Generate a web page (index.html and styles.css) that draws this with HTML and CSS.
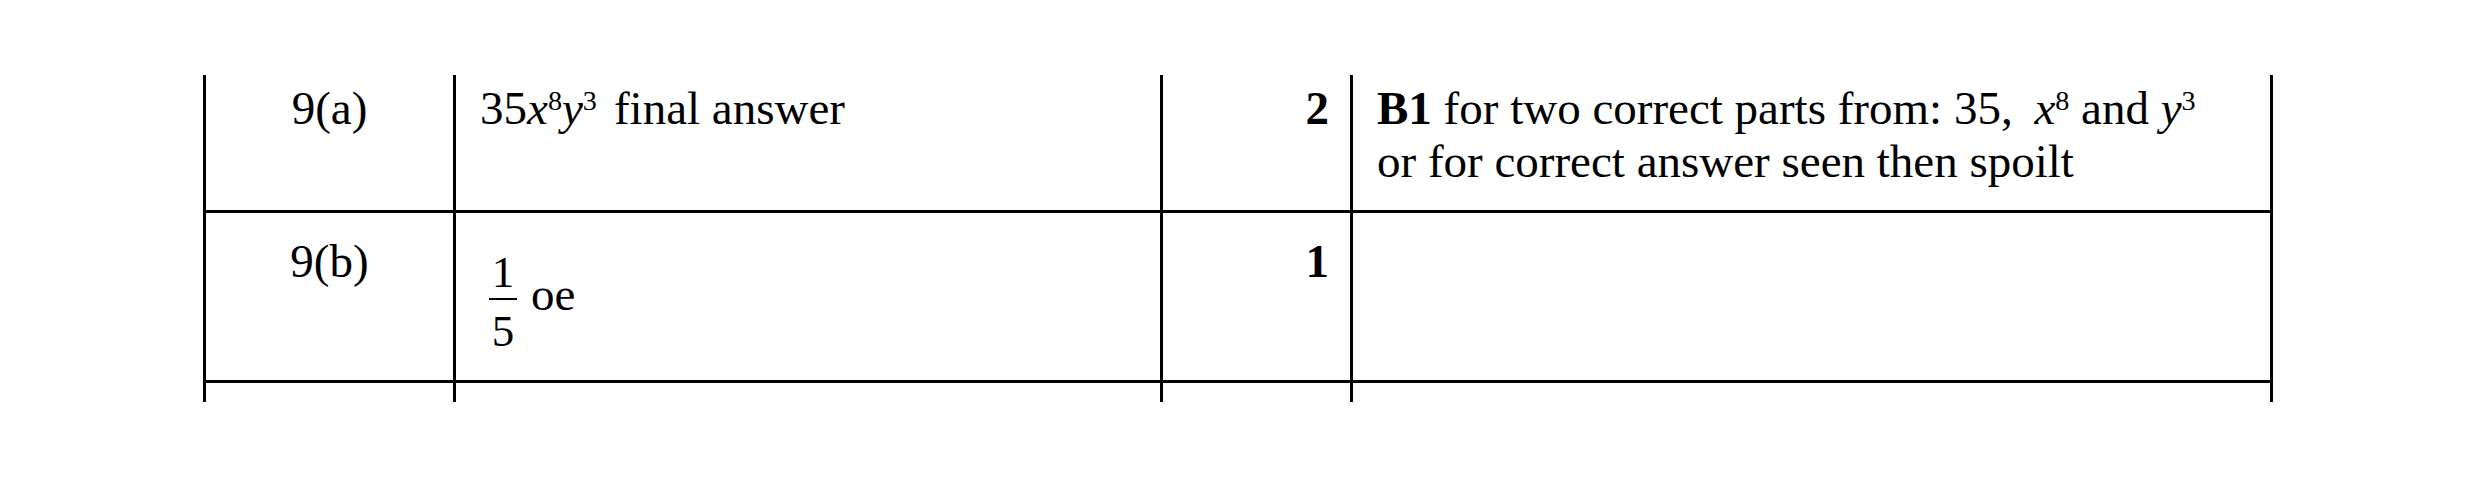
FILE: index.html
```html
<!DOCTYPE html>
<html lang="en">
<head>
<meta charset="utf-8">
<title>Mark scheme 9</title>
<link rel="stylesheet" href="styles.css">
</head>
<body>
<div class="scheme">
  <div class="row r1">
    <div class="cell part">9(a)</div>
    <div class="cell answer">35<i>x</i><span class="sup">8</span><i>y</i><span class="sup">3</span><span class="gap">final answer</span></div>
    <div class="cell marks"><b>2</b></div>
    <div class="cell notes"><b>B1</b> for two correct parts from: 35, <i class="mathgap">x</i><span class="sup">8</span> and <i>y</i><span class="sup">3</span><br>or for correct answer seen then spoilt</div>
  </div>
  <div class="row r2">
    <div class="cell part">9(b)</div>
    <div class="cell answer frac-cell">
      <span class="frac"><span class="num">1</span><span class="bar"></span><span class="den">5</span></span>
      <span class="oe">oe</span>
    </div>
    <div class="cell marks"><b>1</b></div>
    <div class="cell notes"></div>
  </div>
  <div class="row r3">
    <div class="cell part"></div>
    <div class="cell answer"></div>
    <div class="cell marks"></div>
    <div class="cell notes"></div>
  </div>
</div>
</body>
</html>
```
FILE: styles.css
```css
html, body {
  margin: 0;
  padding: 0;
  background: #fff;
}
body {
  width: 2480px;
  height: 477px;
  overflow: hidden;
  font-family: "Liberation Serif", "Times New Roman", serif;
  font-size: 47px;
  line-height: 53px;
  color: #000;
}
.scheme {
  margin-left: 203px;
  padding-top: 75px;
  width: 2070px;
}
.row {
  display: grid;
  grid-template-columns: 250px 707px 190px 923px;
  box-sizing: border-box;
  border-bottom: 3px solid #000;
}
.r1 { height: 138px; }
.r2 { height: 170px; }
.r3 { height: 19px; border-bottom: none; }
.cell {
  box-sizing: border-box;
  border-left: 3px solid #000;
  white-space: nowrap;
}
.notes { border-right: 3px solid #000; }
.r1 .cell { padding-top: 7px; }
.r2 .cell { padding-top: 22px; }
.part { text-align: center; }
.answer { padding-left: 24px; }
.marks { text-align: right; padding-right: 21px; }
.notes { padding-left: 24px; }
i { font-style: italic; }
b { font-weight: bold; }
.mathgap { margin-left: 10px; }
.sup {
  font-size: 0.6em;
  vertical-align: 0.5em;
  line-height: 0;
}
.gap { margin-left: 17px; }
.r2 .frac-cell {
  display: flex;
  align-items: flex-start;
  padding-top: 36px;
}
.frac {
  display: flex;
  flex-direction: column;
  align-items: center;
  margin-left: 9px;
  margin-top: 1px;
  width: 28px;
  font-size: 45px;
  line-height: 45px;
}
.num, .den { display: block; height: 45px; }
.bar {
  display: block;
  width: 28px;
  height: 2px;
  background: #000;
  margin: 3px 0 9px;
}
.oe {
  margin-left: 14px;
  margin-top: 22px;
  line-height: 46px;
}
```
